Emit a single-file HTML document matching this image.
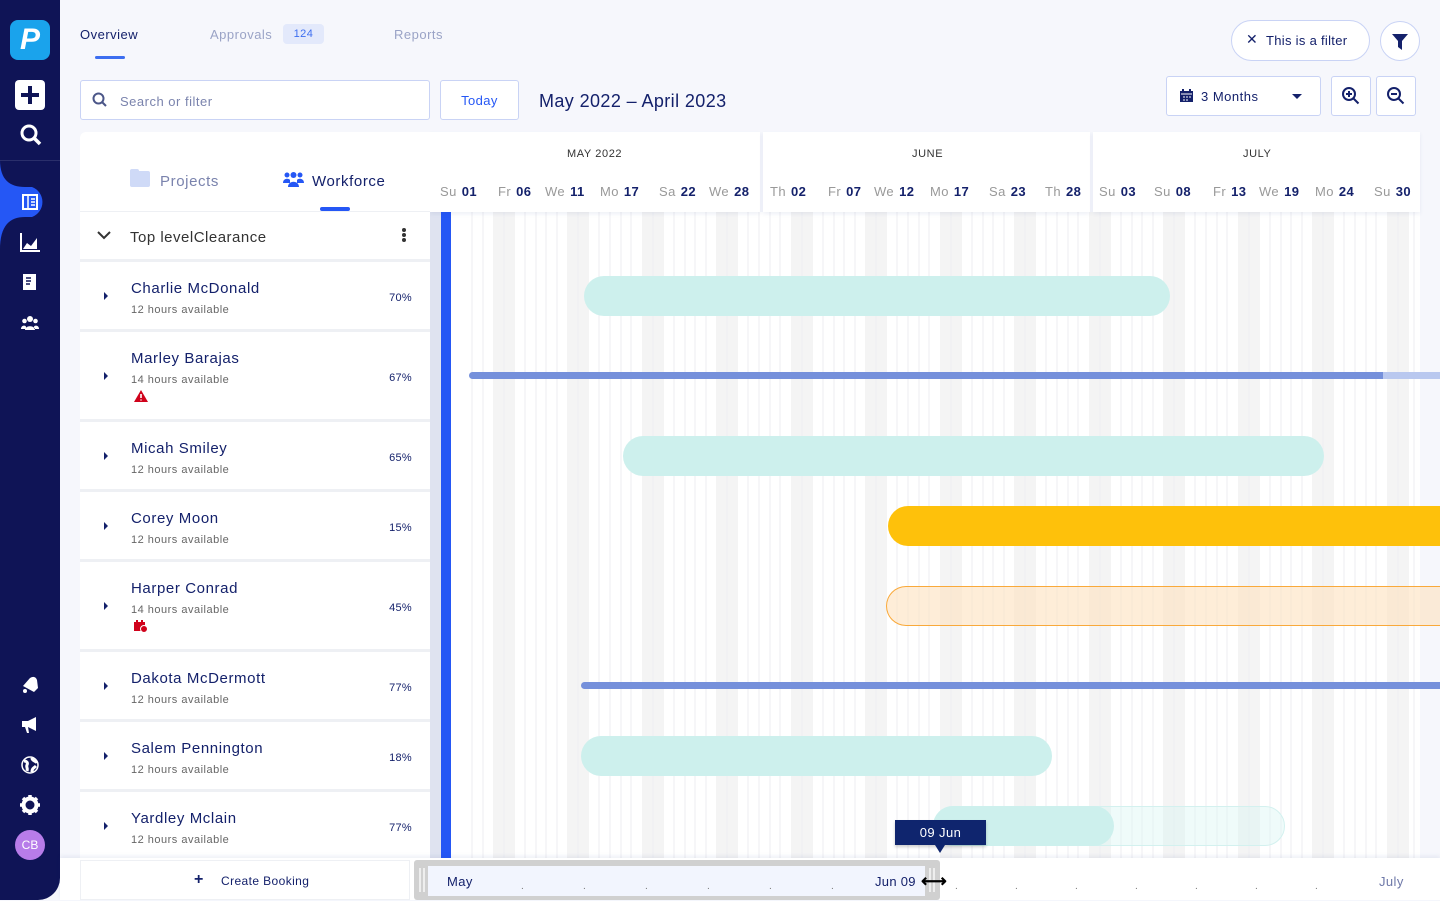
<!DOCTYPE html>
<html><head><meta charset="utf-8"><style>
*{box-sizing:border-box;margin:0;padding:0}
body{width:1440px;height:900px;overflow:hidden;background:#f6f7fc;font-family:"Liberation Sans",sans-serif;position:relative;color:#14216b}
.a{position:absolute}
.side{left:0;top:0;width:60px;height:900px;background:#0f1456;border-radius:0 0 22px 0}
.row{position:absolute;left:80px;width:350px;background:#fff;border-bottom:3px solid #eef0f4}
.row .n{position:absolute;left:51px;font-size:15px;color:#14216b;letter-spacing:.6px}
.row .h{position:absolute;left:51px;font-size:11px;color:#666;letter-spacing:.5px}
.row .p{position:absolute;right:18px;font-size:11px;color:#14216b;letter-spacing:.3px}
.row .t{position:absolute;left:24px;width:0;height:0;border-left:4px solid #14216b;border-top:4px solid transparent;border-bottom:4px solid transparent}
.bar{position:absolute;border-radius:20px}
.day{position:absolute;top:184px;font-size:13px;color:#999;white-space:nowrap;letter-spacing:.4px}
.day b{color:#14216b;font-weight:bold;margin-left:5px}
.mo{position:absolute;top:148px;font-size:11px;color:#333;letter-spacing:.6px}
.btn{position:absolute;background:#fff;border:1px solid #c9d3f5;border-radius:3px}
.dot{position:absolute;top:881px;font-size:10px;color:#777}
</style></head><body>
<div class="a side"></div>
<div class="a" style="left:10px;top:20px;width:40px;height:40px;background:#1aa3ec;border-radius:8px;color:#fff;font-size:30px;font-weight:bold;text-align:center;line-height:40px;font-style:italic">P</div>
<div class="a" style="left:15px;top:80px;width:30px;height:30px;background:#fff;border-radius:4px"></div>
<div class="a" style="left:21px;top:93px;width:18px;height:4px;background:#0f1456"></div>
<div class="a" style="left:28px;top:86px;width:4px;height:18px;background:#0f1456"></div>
<svg class="a" style="left:18px;top:122px" width="26" height="26"><circle cx="11" cy="11" r="7" fill="none" stroke="#fff" stroke-width="3"/><path d="M16 16l6 6" stroke="#fff" stroke-width="3.5"/></svg>
<div class="a" style="left:0;top:160px;width:60px;height:1px;background:#2a2f6b"></div>
<svg class="a" style="left:0;top:160px" width="60" height="90"><path d="M0 0 C0 20 10 27 25 27 H32 A16 16 0 0 1 32 57 H25 C10 57 0 65 0 90 Z" fill="#2557f5"/></svg>
<svg class="a" style="left:22px;top:194px" width="16" height="16"><rect x="1" y="1" width="14" height="14" fill="none" stroke="#fff" stroke-width="2"/><path d="M6 1v14M9 5h4M9 8h4M9 11h4" stroke="#fff" stroke-width="1.5"/></svg>
<svg class="a" style="left:19px;top:232px" width="22" height="22"><path d="M2 1v18h19" stroke="#fff" stroke-width="2" fill="none"/><path d="M4 17l4-6 4 3 6-8v11z" fill="#fff"/></svg>
<svg class="a" style="left:22px;top:273px" width="16" height="20"><rect x="1" y="1" width="13" height="16" fill="#fff"/><path d="M4 5h5M4 8h5M4 11h4" stroke="#0f1456" stroke-width="1.5"/></svg>
<svg class="a" style="left:21px;top:315px" width="18" height="16"><circle cx="9" cy="4" r="3" fill="#fff"/><circle cx="3.5" cy="6" r="2.3" fill="#fff"/><circle cx="14.5" cy="6" r="2.3" fill="#fff"/><path d="M4 15c0-5 10-5 10 0zM0 14c0-4 5-4 5-2v2zM18 14c0-4-5-4-5-2v2z" fill="#fff"/></svg>
<svg class="a" style="left:20px;top:675px" width="20" height="20"><path d="M3 11 L10 3 Q15 0 17 5 L18 13 L14 17Z" fill="#fff"/><circle cx="5" cy="16" r="2" fill="#fff"/></svg>
<svg class="a" style="left:20px;top:715px" width="20" height="20"><path d="M2 6h6l8-4v14l-8-4H2z" fill="#fff"/><path d="M5 12l2 6h2l-1-6z" fill="#fff"/></svg>
<svg class="a" style="left:20px;top:755px" width="20" height="20"><circle cx="10" cy="10" r="8" fill="none" stroke="#fff" stroke-width="1.5"/><path d="M4 6c3 0 4 2 3 4s1 3 0 6M12 3c0 3 4 3 5 5M12 17c0-4 2-4 4-6" stroke="#fff" stroke-width="3" fill="none"/></svg>
<svg class="a" style="left:19px;top:794px" width="22" height="22"><circle cx="11" cy="11" r="6.5" fill="none" stroke="#fff" stroke-width="4"/><path d="M11 1v5M11 16v5M1 11h5M16 11h5M4 4l3.5 3.5M14.5 14.5L18 18M18 4l-3.5 3.5M7.5 14.5L4 18" stroke="#fff" stroke-width="3.5"/></svg>
<div class="a" style="left:15px;top:830px;width:30px;height:30px;border-radius:50%;background:#b77ce9;color:#fff;font-size:12px;text-align:center;line-height:30px">CB</div>

<div class="a" style="left:80px;top:27px;font-size:13px;color:#14216b;letter-spacing:.5px">Overview</div>
<div class="a" style="left:95px;top:56px;width:30px;height:3px;background:#3d6ef0;border-radius:2px"></div>
<div class="a" style="left:210px;top:27px;font-size:13px;color:#9aa3c6;letter-spacing:.5px">Approvals</div>
<div class="a" style="left:283px;top:24px;width:41px;height:20px;background:#e3e9fb;border-radius:4px;font-size:11px;color:#3d6ef0;text-align:center;line-height:20px;letter-spacing:.5px">124</div>
<div class="a" style="left:394px;top:27px;font-size:13px;color:#9aa3c6;letter-spacing:.5px">Reports</div>

<div class="btn" style="left:80px;top:80px;width:350px;height:40px"></div>
<svg class="a" style="left:92px;top:92px" width="16" height="16"><circle cx="6.5" cy="6.5" r="5" fill="none" stroke="#4b5688" stroke-width="2"/><path d="M10 10l4 4" stroke="#4b5688" stroke-width="2"/></svg>
<div class="a" style="left:120px;top:94px;font-size:13px;color:#7a83ad;letter-spacing:.5px">Search or filter</div>
<div class="btn" style="left:440px;top:80px;width:79px;height:40px;font-size:13px;color:#2557f5;text-align:center;line-height:40px;letter-spacing:.4px">Today</div>
<div class="a" style="left:539px;top:91px;font-size:18px;color:#14216b;letter-spacing:.4px">May 2022 – April 2023</div>

<div class="a" style="left:1231px;top:20px;width:139px;height:41px;background:#fff;border:1px solid #c9d3f5;border-radius:21px;font-size:13px;color:#14216b;line-height:40px;padding-left:34px;letter-spacing:.3px">This is a filter</div>
<div class="a" style="left:1246px;top:31px;font-size:14px;color:#14216b">✕</div>
<div class="a" style="left:1380px;top:21px;width:40px;height:40px;background:#fff;border:1px solid #c9d3f5;border-radius:50%"></div>
<svg class="a" style="left:1391px;top:33px" width="18" height="18"><path d="M1 1h16l-6 7v9l-4-3v-6z" fill="#14216b"/></svg>
<div class="btn" style="left:1166px;top:76px;width:155px;height:40px;font-size:13px;color:#14216b;line-height:40px;padding-left:34px;letter-spacing:.5px">3 Months</div>
<svg class="a" style="left:1180px;top:89px" width="13" height="13"><rect x="0" y="2" width="13" height="11" fill="#14216b"/><path d="M1 5h11M3 8h2M6 8h2M9 8h2M3 11h2M6 11h2" stroke="#fff" stroke-width="1"/><path d="M3 0v3M10 0v3" stroke="#14216b" stroke-width="2"/></svg>
<div class="a" style="left:1292px;top:94px;border-top:5px solid #14216b;border-left:5px solid transparent;border-right:5px solid transparent"></div>
<div class="btn" style="left:1331px;top:76px;width:40px;height:40px"></div>
<div class="btn" style="left:1376px;top:76px;width:40px;height:40px"></div>
<svg class="a" style="left:1341px;top:86px" width="20" height="20"><circle cx="8" cy="8" r="6" fill="none" stroke="#14216b" stroke-width="2"/><path d="M12.5 12.5l5 5M5 8h6M8 5v6" stroke="#14216b" stroke-width="2"/></svg>
<svg class="a" style="left:1386px;top:86px" width="20" height="20"><circle cx="8" cy="8" r="6" fill="none" stroke="#14216b" stroke-width="2"/><path d="M12.5 12.5l5 5M5 8h6" stroke="#14216b" stroke-width="2"/></svg>

<svg class="a" style="left:430px;top:212px" width="1010" height="648">
<rect x="0" y="0" width="990" height="648" fill="#fff"/>
<rect x="990" y="0" width="20" height="648" fill="#f6f7fc"/>
<g fill="#f4f4f4">
<rect x="63" width="22" height="648"/><rect x="137" width="22" height="648"/><rect x="212" width="22" height="648"/><rect x="286" width="22" height="648"/><rect x="361" width="22" height="648"/><rect x="435" width="22" height="648"/><rect x="510" width="22" height="648"/><rect x="584" width="22" height="648"/><rect x="659" width="22" height="648"/><rect x="733" width="22" height="648"/><rect x="808" width="22" height="648"/><rect x="882" width="22" height="648"/><rect x="957" width="22" height="648"/>
</g>
<g stroke="#eeeef2" stroke-width="1">
<path d="M42 0v648M53 0v648M74 0v648M95 0v648M106 0v648M116 0v648M127 0v648M148 0v648M169 0v648M180 0v648M191 0v648M201 0v648M223 0v648M244 0v648M255 0v648M265 0v648M276 0v648M297 0v648M318 0v648M329 0v648M340 0v648M350 0v648M372 0v648M393 0v648M404 0v648M414 0v648M425 0v648M446 0v648M467 0v648M478 0v648M489 0v648M499 0v648M521 0v648M542 0v648M553 0v648M563 0v648M574 0v648M595 0v648M616 0v648M627 0v648M638 0v648M648 0v648M670 0v648M691 0v648M702 0v648M712 0v648M723 0v648M744 0v648M765 0v648M776 0v648M787 0v648M797 0v648M819 0v648M840 0v648M851 0v648M861 0v648M872 0v648M893 0v648M914 0v648M925 0v648M936 0v648M946 0v648M968 0v648M984 0v648"/></g>
<rect x="0" width="11" height="648" fill="#dfe3f0"/>
<rect x="11" width="10" height="648" fill="#2557f5"/>
</svg>

<div class="a" style="left:430px;top:132px;width:330px;height:80px;background:#fff;box-shadow:0 2px 4px rgba(40,60,140,.08)"></div>
<div class="a" style="left:763px;top:132px;width:327px;height:80px;background:#fff;box-shadow:0 2px 4px rgba(40,60,140,.08)"></div>
<div class="a" style="left:1093px;top:132px;width:327px;height:80px;background:#fff;box-shadow:0 2px 4px rgba(40,60,140,.08)"></div>
<div class="mo" style="left:567px">MAY 2022</div>
<div class="mo" style="left:912px">JUNE</div>
<div class="mo" style="left:1243px">JULY</div>
<div class="day" style="left:440px">Su<b>01</b></div>
<div class="day" style="left:498px">Fr<b>06</b></div>
<div class="day" style="left:545px">We<b>11</b></div>
<div class="day" style="left:600px">Mo<b>17</b></div>
<div class="day" style="left:659px">Sa<b>22</b></div>
<div class="day" style="left:709px">We<b>28</b></div>
<div class="day" style="left:770px">Th<b>02</b></div>
<div class="day" style="left:828px">Fr<b>07</b></div>
<div class="day" style="left:874px">We<b>12</b></div>
<div class="day" style="left:930px">Mo<b>17</b></div>
<div class="day" style="left:989px">Sa<b>23</b></div>
<div class="day" style="left:1045px">Th<b>28</b></div>
<div class="day" style="left:1099px">Su<b>03</b></div>
<div class="day" style="left:1154px">Su<b>08</b></div>
<div class="day" style="left:1213px">Fr<b>13</b></div>
<div class="day" style="left:1259px">We<b>19</b></div>
<div class="day" style="left:1315px">Mo<b>24</b></div>
<div class="day" style="left:1374px">Su<b>30</b></div>

<div class="bar" style="left:584px;top:276px;width:586px;height:40px;background:#cdf0ed"></div>
<div class="bar" style="left:469px;top:372px;width:971px;height:7px;background:#7590db;border-radius:4px"></div>
<div class="a" style="left:1383px;top:372px;width:57px;height:7px;background:#b9c8ef"></div>
<div class="bar" style="left:623px;top:436px;width:701px;height:40px;background:#cdf0ed"></div>
<div class="a" style="left:888px;top:506px;width:560px;height:40px;background:#fec10b;border-radius:20px 0 0 20px"></div>
<div class="a" style="left:886px;top:586px;width:560px;height:40px;background:rgba(253,225,190,.6);border:1px solid #f9a93a;border-right:none;border-radius:20px 0 0 20px"></div>
<div class="bar" style="left:581px;top:682px;width:859px;height:7px;background:#7590db;border-radius:4px 0 0 4px"></div>
<div class="bar" style="left:581px;top:736px;width:471px;height:40px;background:#cdf0ed"></div>
<div class="bar" style="left:933px;top:806px;width:352px;height:40px;background:rgba(215,245,242,.4);border:1px solid #d3f1ef"></div>
<div class="bar" style="left:933px;top:806px;width:181px;height:40px;background:#cdf0ed"></div>
<div class="a" style="left:895px;top:820px;width:91px;height:25px;background:#0f256e;color:#fff;font-size:13px;text-align:center;line-height:25px;box-shadow:0 2px 3px rgba(0,0,0,.2);letter-spacing:.4px">09 Jun</div>
<div class="a" style="left:935px;top:845px;border-top:8px solid #0f256e;border-left:5px solid transparent;border-right:5px solid transparent"></div>

<div class="a" style="left:80px;top:132px;width:350px;height:80px;background:#fff;border-radius:6px 0 0 0"></div>
<div class="a" style="left:130px;top:171px;width:20px;height:16px;background:#cfdaf7;border-radius:2px"></div>
<div class="a" style="left:130px;top:169px;width:9px;height:4px;background:#cfdaf7;border-radius:2px 2px 0 0"></div>
<div class="a" style="left:160px;top:173px;font-size:15px;color:#7a83ad;letter-spacing:.6px">Projects</div>
<svg class="a" style="left:283px;top:171px" width="21" height="17"><circle cx="10.5" cy="4" r="3" fill="#2557f5"/><circle cx="4" cy="4" r="2.5" fill="#2557f5"/><circle cx="17" cy="4" r="2.5" fill="#2557f5"/><path d="M5 16c0-7 11-7 11 0zM0 12c0-5 6-5 7-3v3zM21 12c0-5-6-5-7-3v3z" fill="#2557f5"/></svg>
<div class="a" style="left:312px;top:173px;font-size:15px;color:#14216b;letter-spacing:.6px">Workforce</div>
<div class="a" style="left:320px;top:207px;width:30px;height:4px;background:#2557f5;border-radius:2px"></div>
<div class="a" style="left:80px;top:211px;width:350px;height:1px;background:#eef0f4"></div>

<div class="row" style="top:212px;height:50px">
<svg class="a" style="left:17px;top:19px" width="14" height="10"><path d="M1 1l6 6 6-6" stroke="#333" stroke-width="2" fill="none"/></svg>
<div class="a" style="left:50px;top:17px;font-size:15px;color:#333;letter-spacing:.5px">Top levelClearance</div>
<div class="a" style="left:322px;top:16px;width:4px;height:4px;border-radius:50%;background:#333;box-shadow:0 5px 0 #333,0 10px 0 #333"></div>
</div>
<div class="row" style="top:262px;height:70px"><div class="t" style="top:30px"></div><div class="n" style="top:18px">Charlie McDonald</div><div class="h" style="top:42px">12 hours available</div><div class="p" style="top:30px">70%</div></div>
<div class="row" style="top:332px;height:90px"><div class="t" style="top:40px"></div><div class="n" style="top:18px">Marley Barajas</div><div class="h" style="top:42px">14 hours available</div><div class="p" style="top:40px">67%</div>
<svg class="a" style="left:54px;top:58px" width="14" height="12"><path d="M7 0L14 12H0z" fill="#d0021b"/><path d="M7 4v4M7 9.5v1" stroke="#fff" stroke-width="1.6"/></svg></div>
<div class="row" style="top:422px;height:70px"><div class="t" style="top:30px"></div><div class="n" style="top:18px">Micah Smiley</div><div class="h" style="top:42px">12 hours available</div><div class="p" style="top:30px">65%</div></div>
<div class="row" style="top:492px;height:70px"><div class="t" style="top:30px"></div><div class="n" style="top:18px">Corey Moon</div><div class="h" style="top:42px">12 hours available</div><div class="p" style="top:30px">15%</div></div>
<div class="row" style="top:562px;height:90px"><div class="t" style="top:40px"></div><div class="n" style="top:18px">Harper Conrad</div><div class="h" style="top:42px">14 hours available</div><div class="p" style="top:40px">45%</div>
<svg class="a" style="left:54px;top:58px" width="14" height="13"><rect x="0" y="2" width="11" height="9" fill="#d0021b"/><path d="M3 0v3M8 0v3" stroke="#d0021b" stroke-width="2"/><circle cx="10" cy="9" r="3.5" fill="#d0021b" stroke="#fff"/></svg></div>
<div class="row" style="top:652px;height:70px"><div class="t" style="top:30px"></div><div class="n" style="top:18px">Dakota McDermott</div><div class="h" style="top:42px">12 hours available</div><div class="p" style="top:30px">77%</div></div>
<div class="row" style="top:722px;height:70px"><div class="t" style="top:30px"></div><div class="n" style="top:18px">Salem Pennington</div><div class="h" style="top:42px">12 hours available</div><div class="p" style="top:30px">18%</div></div>
<div class="row" style="top:792px;height:70px"><div class="t" style="top:30px"></div><div class="n" style="top:18px">Yardley Mclain</div><div class="h" style="top:42px">12 hours available</div><div class="p" style="top:30px">77%</div></div>

<div class="a" style="left:60px;top:858px;width:1380px;height:42px;background:#fff;box-shadow:0 -2px 4px rgba(40,60,140,.08)"></div>
<div class="a" style="left:80px;top:860px;width:330px;height:40px;border:1px solid #eef0f4;font-size:12px;color:#14216b;line-height:40px;padding-left:140px;letter-spacing:.4px">Create Booking</div>
<div class="a" style="left:194px;top:871px;font-size:16px;color:#14216b;font-weight:bold">+</div>
<div class="a" style="left:414px;top:860px;width:526px;height:40px;background:#d0d0d0;border-radius:3px"></div>
<div class="a" style="left:428px;top:866px;width:497px;height:30px;background:#f2f5fe"></div>
<div class="a" style="left:419px;top:868px;width:2px;height:24px;background:#eee;box-shadow:4px 0 0 #eee"></div>
<div class="a" style="left:929px;top:868px;width:2px;height:24px;background:#eee;box-shadow:4px 0 0 #eee"></div>
<div class="a" style="left:447px;top:874px;font-size:13px;color:#14216b;letter-spacing:.4px">May</div>
<div class="a" style="left:875px;top:874px;font-size:13px;color:#14216b;letter-spacing:.3px">Jun 09</div>
<div class="a" style="left:921px;top:871px;font-size:18px;font-weight:bold;color:#000">⟷</div>
<div class="dot" style="left:521px">.</div><div class="dot" style="left:583px">.</div><div class="dot" style="left:645px">.</div><div class="dot" style="left:707px">.</div><div class="dot" style="left:769px">.</div><div class="dot" style="left:831px">.</div>
<div class="dot" style="left:955px">.</div><div class="dot" style="left:1015px">.</div><div class="dot" style="left:1075px">.</div><div class="dot" style="left:1135px">.</div><div class="dot" style="left:1195px">.</div><div class="dot" style="left:1255px">.</div><div class="dot" style="left:1315px">.</div>
<div class="a" style="left:1379px;top:874px;font-size:13px;color:#6e78a8;letter-spacing:.4px">July</div>
</body></html>
